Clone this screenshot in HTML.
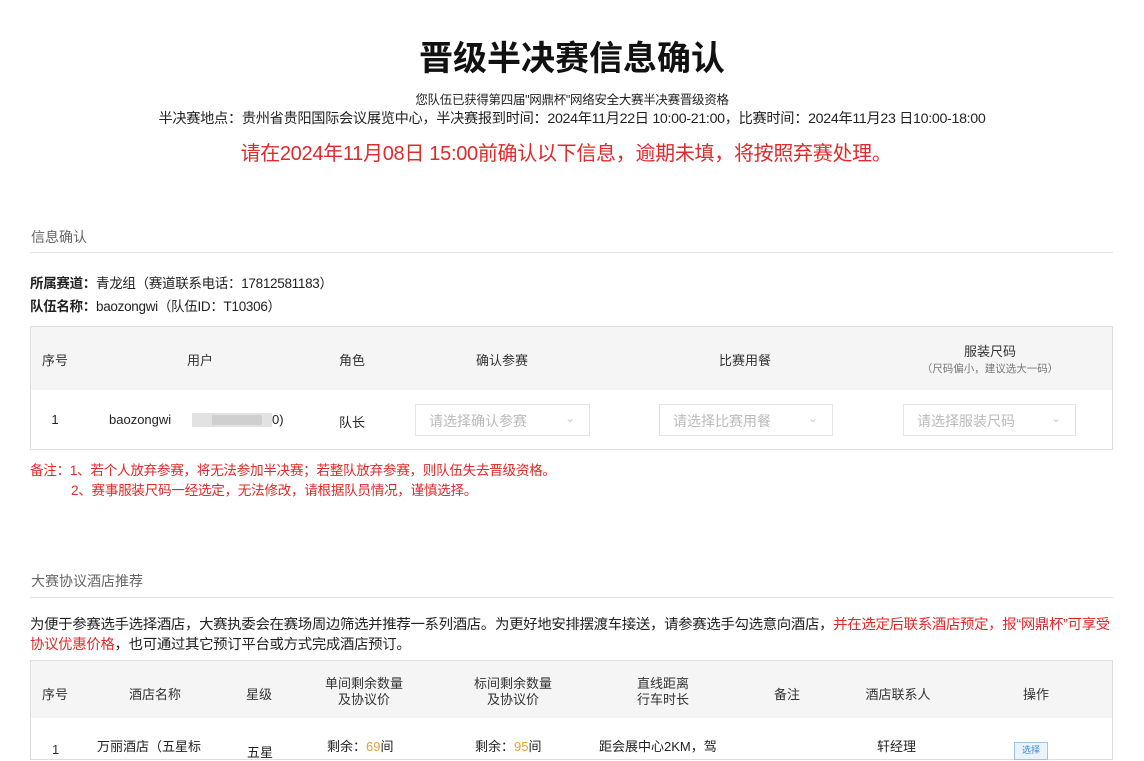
<!DOCTYPE html>
<html><head><meta charset="utf-8"><style>
body{margin:0;width:1144px;height:750px;overflow:hidden;background:#fff;font-family:"Liberation Sans","Noto Sans CJK SC",sans-serif;color:#333;position:relative}
.a{position:absolute;white-space:nowrap}
.c{transform:translateX(-50%);text-align:center}
.sel{position:absolute;height:32px;border:1px solid #e4e4e4;background:#fff;color:#bbb;font-size:14px;line-height:32px;padding-left:13px;box-sizing:border-box}
.sel:after{content:"⌄";position:absolute;right:14px;top:-3px;color:#ccc;font-size:12px}
.red{color:#e0292b}
</style></head><body>
<div class="a c" style="left:572px;top:31px;font-size:34px;font-weight:bold;color:#111">晋级半决赛信息确认</div>
<div class="a c" style="left:572px;top:89px;font-size:12.5px;color:#222;letter-spacing:-0.3px">您队伍已获得第四届"网鼎杯"网络安全大赛半决赛晋级资格</div>
<div class="a c" style="left:572px;top:108px;font-size:14.2px;color:#222;letter-spacing:-0.3px">半决赛地点：贵州省贵阳国际会议展览中心，半决赛报到时间：2024年11月22日 10:00-21:00，比赛时间：2024年11月23 日10:00-18:00</div>
<div class="a c red" style="left:566px;top:137px;font-size:20px;letter-spacing:-0.3px">请在2024年11月08日 15:00前确认以下信息，逾期未填，将按照弃赛处理。</div>

<div class="a" style="left:31px;top:227px;font-size:14px;color:#666">信息确认</div>
<div class="a" style="left:30px;top:252px;width:1083px;height:1px;background:#e2e2e2"></div>
<div class="a" style="left:30px;top:272px;font-size:13.5px;color:#222;letter-spacing:-0.3px"><b>所属赛道：</b>青龙组（赛道联系电话：17812581183）</div>
<div class="a" style="left:30px;top:295px;font-size:13.5px;color:#222;letter-spacing:-0.3px"><b>队伍名称：</b>baozongwi（队伍ID：T10306）</div>

<div class="a" style="left:30px;top:326px;width:1083px;height:124px;border:1px solid #ddd;box-sizing:border-box"></div>
<div class="a" style="left:31px;top:327px;width:1081px;height:63px;background:#f5f5f5"></div>
<div class="a c" style="left:55px;top:350px;font-size:13px">序号</div>
<div class="a c" style="left:200px;top:350px;font-size:13px">用户</div>
<div class="a c" style="left:352px;top:350px;font-size:13px">角色</div>
<div class="a c" style="left:502px;top:350px;font-size:13px">确认参赛</div>
<div class="a c" style="left:745px;top:350px;font-size:13px">比赛用餐</div>
<div class="a c" style="left:990px;top:341px;font-size:13px">服装尺码</div>
<div class="a c" style="left:990px;top:361px;font-size:10.5px;color:#777">（尺码偏小，建议选大一码）</div>
<div class="a c" style="left:55px;top:412px;font-size:13px;color:#222">1</div>
<div class="a" style="left:109px;top:412px;font-size:13px;color:#222">baozongwi</div>
<div class="a" style="left:192px;top:413px;width:80px;height:14px;background:#e2e2e2"></div>
<div class="a" style="left:212px;top:415px;width:50px;height:10px;background:#cfcfcf"></div>
<div class="a" style="left:272px;top:412px;font-size:13px;color:#222">0)</div>
<div class="a c" style="left:352px;top:412px;font-size:13px;color:#222">队长</div>
<div class="sel" style="left:415px;top:404px;width:175px">请选择确认参赛</div>
<div class="sel" style="left:659px;top:404px;width:174px">请选择比赛用餐</div>
<div class="sel" style="left:903px;top:404px;width:173px">请选择服装尺码</div>
<div class="a red" style="left:30px;top:459px;font-size:13.6px;letter-spacing:-0.3px">备注：1、若个人放弃参赛，将无法参加半决赛；若整队放弃参赛，则队伍失去晋级资格。</div>
<div class="a red" style="left:71px;top:479px;font-size:13.6px;letter-spacing:-0.3px">2、赛事服装尺码一经选定，无法修改，请根据队员情况，谨慎选择。</div>

<div class="a" style="left:31px;top:571px;font-size:14px;color:#666">大赛协议酒店推荐</div>
<div class="a" style="left:30px;top:597px;width:1083px;height:1px;background:#e2e2e2"></div>
<div class="a" style="left:30px;top:613px;font-size:14.4px;color:#222;letter-spacing:-0.3px">为便于参赛选手选择酒店，大赛执委会在赛场周边筛选并推荐一系列酒店。为更好地安排摆渡车接送，请参赛选手勾选意向酒店，<span class="red">并在选定后联系酒店预定，报“网鼎杯”可享受</span></div>
<div class="a" style="left:30px;top:633px;font-size:14.4px;color:#222;letter-spacing:-0.3px"><span class="red">协议优惠价格</span>，也可通过其它预订平台或方式完成酒店预订。</div>

<div class="a" style="left:30px;top:660px;width:1083px;height:100px;border:1px solid #ddd;box-sizing:border-box"></div>
<div class="a" style="left:31px;top:661px;width:1081px;height:57px;background:#f5f5f5"></div>
<div class="a c" style="left:55px;top:684px;font-size:13px">序号</div>
<div class="a c" style="left:155px;top:684px;font-size:13px">酒店名称</div>
<div class="a c" style="left:259px;top:684px;font-size:13px">星级</div>
<div class="a c" style="left:364px;top:676px;font-size:13px;line-height:16px">单间剩余数量<br>及协议价</div>
<div class="a c" style="left:513px;top:676px;font-size:13px;line-height:16px">标间剩余数量<br>及协议价</div>
<div class="a c" style="left:663px;top:676px;font-size:13px;line-height:16px">直线距离<br>行车时长</div>
<div class="a c" style="left:787px;top:684px;font-size:13px">备注</div>
<div class="a c" style="left:898px;top:684px;font-size:13px">酒店联系人</div>
<div class="a c" style="left:1036px;top:684px;font-size:13px">操作</div>
<div class="a" style="left:97px;top:736px;font-size:13px;color:#222">万丽酒店（五星标</div>
<div class="a" style="left:247px;top:742px;font-size:13px;color:#222">五星</div>
<div class="a" style="left:327px;top:736px;font-size:13px;color:#222">剩余：<span style="color:#e8a23a">69</span>间</div>
<div class="a" style="left:475px;top:736px;font-size:13px;color:#222">剩余：<span style="color:#e8a23a">95</span>间</div>
<div class="a" style="left:599px;top:736px;font-size:13px;color:#222">距会展中心2KM，驾</div>
<div class="a" style="left:877px;top:736px;font-size:13px;color:#222">轩经理</div>
<div class="a" style="left:1014px;top:742px;width:32px;height:16px;border:1px solid #9cc3e8;background:#eaf3fc;color:#3b8ad9;font-size:9px;text-align:center">选择</div>
<div class="a" style="left:52px;top:742px;font-size:13px">1</div>
</body></html>
